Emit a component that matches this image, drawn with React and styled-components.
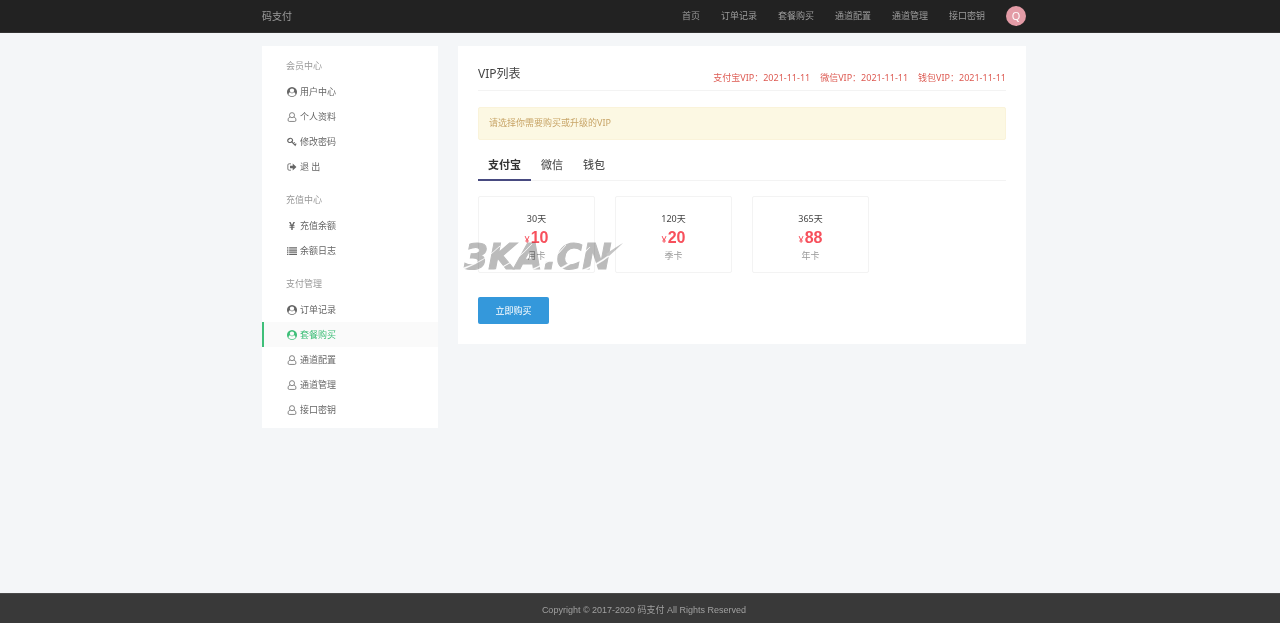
import React, { useState } from "react";
import styled, { createGlobalStyle, css } from "styled-components";

const GlobalStyle = createGlobalStyle`
  * { box-sizing: border-box; }
  body {
    margin: 0;
    background: #f4f6f8;
    color: #666;
    font: 9px/14px "Noto Sans", "Noto Sans CJK SC", sans-serif;
  }
  a { color: inherit; text-decoration: none; }
  h1, h2, h3, p, ul, dl { margin: 0; padding: 0; font-weight: 400; }
  ul { list-style: none; }
  button, input { font: inherit; }
`;

const Page = styled.div`
  min-height: 100vh;
  display: flex;
  flex-direction: column;
`;

const Container = styled.div`
  width: 100%;
  max-width: 772px;
  margin: 0 auto;
  padding: 0 0 0 8px;
  display: flex;
`;

const TopBar = styled.header`
  background: #222;
  border-bottom: 1px solid #333;
`;

const TopInner = styled(Container)`
  height: 32px;
  align-items: center;
  justify-content: space-between;
  color: #9d9d9d;
`;

const Brand = styled.a`
  font-size: 10px;
`;

const Nav = styled.nav`
  display: flex;
  align-items: center;
  gap: 21px;
`;

const Avatar = styled.a`
  width: 20px;
  height: 20px;
  border-radius: 50%;
  background: #e39ba6;
  color: #fff;
  font: 11px/20px "Open Sans", sans-serif;
  text-align: center;
`;

const Content = styled(Container)`
  flex: 1;
  align-items: flex-start;
  gap: 20px;
  padding-top: 13px;
  padding-bottom: 20px;
`;

const Sidebar = styled.aside`
  flex: 0 0 176px;
  background: #fff;
  padding: 13px 0 6px;
`;

const Group = styled.section`
  & + & { margin-top: 14px; }
`;

const GroupTitle = styled.h3`
  padding: 0 24px;
  margin-bottom: 6px;
  font-size: 9px;
  line-height: 14px;
  color: #999;
`;

const SideLink = styled.a`
  display: flex;
  align-items: center;
  gap: 3px;
  height: 25px;
  padding-left: 23px;
  border-left: 2px solid transparent;
  ${(p) => p.$active && css`
    color: #3fbf79;
    background: #fafafa;
    border-left-color: #3fbf79;
  `}
`;

const Icon = styled.svg`
  width: 10px;
  height: 10px;
  flex: none;
  fill: currentColor;
`;

const Panel = styled.main`
  flex: 1;
  min-width: 0;
  background: #fff;
  padding: 18px 20px 20px;
`;

const PanelHead = styled.div`
  display: flex;
  justify-content: space-between;
  align-items: flex-end;
  padding-bottom: 6px;
  border-bottom: 1px solid #f3f3f3;
`;

const Title = styled.h2`
  font-size: 12px;
  line-height: 20px;
  color: #444;
`;

const Expiries = styled.ul`
  display: flex;
  gap: 10px;
  color: #dd5a52;
  line-height: 12px;
`;

const Notice = styled.p`
  margin-top: 16px;
  padding: 8px 10px 9px;
  border: 1px solid #faf3da;
  border-radius: 2px;
  background: #fcf8e3;
  color: #c8a568;
`;

const Tabs = styled.div`
  display: flex;
  margin-top: 10px;
  border-bottom: 1px solid #f3f3f3;
`;

const Tab = styled.button`
  height: 31px;
  margin-bottom: -1px;
  padding: 0 10px;
  border: 0;
  border-bottom: 2px solid ${(p) => (p.$active ? "#474a80" : "transparent")};
  background: none;
  font-size: 11px;
  font-weight: ${(p) => (p.$active ? 700 : 500)};
  color: ${(p) => (p.$active ? "#333" : "#555")};
  cursor: pointer;
`;

const Plans = styled.div`
  position: relative;
  display: flex;
  gap: 20px;
  margin-top: 15px;
`;

const Plan = styled.label`
  flex: 0 0 117px;
  height: 77px;
  padding-top: 14px;
  border: 1px solid #f3f3f3;
  border-radius: 2px;
  text-align: center;
  cursor: pointer;
`;

const PlanInput = styled.input`
  position: absolute;
  opacity: 0;
  pointer-events: none;
`;

const PlanLine = styled.span`
  display: block;
  line-height: 16px;
  color: ${(p) => (p.$muted ? "#999" : "#444")};
`;

const Price = styled.span`
  display: block;
  color: #f7505c;
  font: 700 16px/21px "Liberation Sans", sans-serif;
`;

const Currency = styled.small`
  margin-right: 1px;
  font: 9px "Noto Sans", sans-serif;
`;

const Watermark = styled.svg`
  position: absolute;
  left: -16px;
  top: 44px;
  width: 164px;
  height: 34px;
  pointer-events: none;
  mix-blend-mode: multiply;
`;

const BuyButton = styled.button`
  margin-top: 24px;
  width: 71px;
  height: 27px;
  padding: 0;
  border: 0;
  border-radius: 2px;
  background: #3498db;
  color: #fff;
  cursor: pointer;
`;

const Footer = styled.footer`
  padding: 10px 0 7px 8px;
  background: #393939;
  border-top: 1px solid #4a4a4a;
  color: #a0a0a0;
  font: 9px/12px "Liberation Sans", "Noto Sans CJK SC", sans-serif;
  text-align: center;
`;

const icons = {
  circle: (
    <path
      transform="scale(.0078125)"
      d="M1523 1339q-22-155-87.500-257.500t-184.500-118.500q-67 74-159.500 115.500t-195.500 41.500-195.500-41.500-159.500-115.500q-119 16-184.500 118.500t-87.500 257.500q106 150 271 237.500t356 87.500 356-87.500 271-237.500zM1280 640q0-159-112.500-271.500t-271.500-112.500-271.500 112.500-112.500 271.500 112.500 271.500 271.500 112.500 271.500-112.500 112.500-271.500zM1792 896q0 182-71 347.500t-190.500 286-285.500 191.500-349 71q-182 0-348-71t-286-191-191-286-71-348 71-348 191-286 286-191 348-71 348 71 286 191 191 286 71 348z"
      fillRule="evenodd"
    />
  ),
  user: (
    <path
      fill="none"
      stroke="currentColor"
      strokeWidth="1.1"
      d="M4.3 7.1C2.2 7.5 1.5 9.3 1.5 11.3Q1.5 13.2 3.2 13.2H10.8Q12.5 13.2 12.5 11.3C12.5 9.3 11.8 7.5 9.7 7.1M7 .9A3.5 3.5 0 0 1 7 8A3.5 3.5 0 0 1 7 .9Z"
    />
  ),
  key: (
    <>
      <ellipse cx="4.4" cy="4.8" rx="3.4" ry="2.8" transform="rotate(-25 4.4 4.8)" fill="none" stroke="currentColor" strokeWidth="1.6" />
      <path d="M6.2 6.4L12.3 12.4M9 9.2L10.8 7.4M11 11.2L13 9.2" fill="none" stroke="currentColor" strokeWidth="1.6" />
    </>
  ),
  exit: (
    <>
      <path d="M5.5 2.5H3Q1.2 2.5 1.2 4.2V9.8Q1.2 11.5 3 11.5H5.5" fill="none" stroke="currentColor" strokeWidth="1.2" />
      <path d="M4.2 5.2H8V2.2L13.2 7L8 11.8V8.8H4.2Z" />
    </>
  ),
  yen: <path d="M2.8 1.5H5L7 5.5L9 1.5H11.2L8.8 6H10.5V7.1H8V8.2H10.5V9.3H8V12.5H6V9.3H3.5V8.2H6V7.1H3.5V6H5.2Z" />,
  list: <path d="M0 1.8H2V3.6H0ZM3 1.8H14V3.6H3ZM0 4.8H2V6.6H0ZM3 4.8H14V6.6H3ZM0 7.8H2V9.6H0ZM3 7.8H14V9.6H3ZM0 10.8H2V12.6H0ZM3 10.8H14V12.6H3Z" />,
};

const navItems = ["首页", "订单记录", "套餐购买", "通道配置", "通道管理", "接口密钥"];

const groups = [
  { title: "会员中心", items: [["circle", "用户中心"], ["user", "个人资料"], ["key", "修改密码"], ["exit", "退 出"]] },
  { title: "充值中心", items: [["yen", "充值余额"], ["list", "余额日志"]] },
  {
    title: "支付管理",
    items: [["circle", "订单记录"], ["circle", "套餐购买", true], ["user", "通道配置"], ["user", "通道管理"], ["user", "接口密钥"]],
  },
];

const plans = [["30天", "10", "月卡"], ["120天", "20", "季卡"], ["365天", "88", "年卡"]];

export default function App() {
  const [tab, setTab] = useState("支付宝");
  return (
    <Page>
      <GlobalStyle />
      <TopBar>
        <TopInner>
          <Brand href="#">码支付</Brand>
          <Nav>
            {navItems.map((n) => <a href="#" key={n}>{n}</a>)}
            <Avatar href="#">Q</Avatar>
          </Nav>
        </TopInner>
      </TopBar>
      <Content>
        <Sidebar>
          {groups.map((g) => (
            <Group key={g.title}>
              <GroupTitle>{g.title}</GroupTitle>
              {g.items.map(([icon, label, active]) => (
                <SideLink href="#" key={label} $active={active}>
                  <Icon viewBox="0 0 14 14" aria-hidden="true">{icons[icon]}</Icon>
                  {label}
                </SideLink>
              ))}
            </Group>
          ))}
        </Sidebar>
        <Panel>
          <PanelHead>
            <Title>VIP列表</Title>
            <Expiries>
              {["支付宝", "微信", "钱包"].map((n) => <li key={n}>{n}VIP：2021-11-11</li>)}
            </Expiries>
          </PanelHead>
          <Notice>请选择你需要购买或升级的VIP</Notice>
          <Tabs role="tablist">
            {["支付宝", "微信", "钱包"].map((n) => (
              <Tab key={n} type="button" role="tab" aria-selected={tab === n} $active={tab === n} onClick={() => setTab(n)}>{n}</Tab>
            ))}
          </Tabs>
          <Plans>
            {plans.map(([days, price, name]) => (
              <Plan key={days}>
                <PlanInput type="radio" name="plan" value={days} />
                <PlanLine>{days}</PlanLine>
                <Price><Currency>¥</Currency>{price}</Price>
                <PlanLine $muted>{name}</PlanLine>
              </Plan>
            ))}
            <Watermark viewBox="0 0 164 34" aria-hidden="true">
              <text x="2" y="29" fontFamily="DejaVu Sans, sans-serif" fontSize="35" fontWeight="700" fontStyle="italic" fill="#bbb" stroke="#bbb" strokeWidth="1">3KA.CN</text>
              <path d="M1 28Q22 22 38 6Q24 20 1 29.5ZM28 32Q52 24 70 4Q54 23 28 33ZM62 32Q88 24 104 5Q90 24 62 33ZM90 32Q112 22 128 7Q114 24 90 33ZM116 32Q142 22 160 4Q144 23 116 33Z" fill="#fff" stroke="#fff" strokeWidth=".5" />
              <path d="M144 14Q154 7 161 3Q156 8 147 16Z" fill="#c4c4c4" />
            </Watermark>
          </Plans>
          <BuyButton type="button">立即购买</BuyButton>
        </Panel>
      </Content>
      <Footer>Copyright © 2017-2020 码支付 All Rights Reserved</Footer>
    </Page>
  );
}
